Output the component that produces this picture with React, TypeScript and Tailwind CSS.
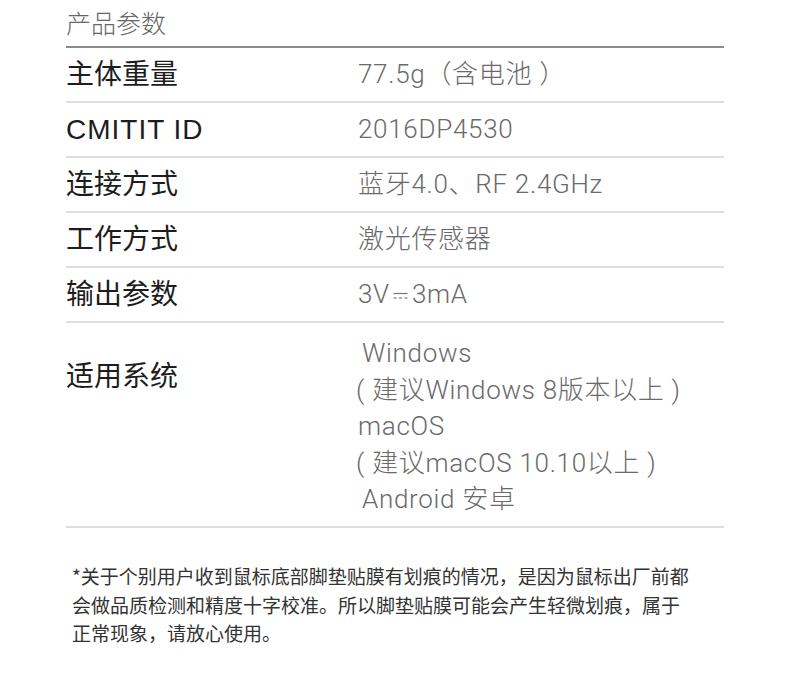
import type { ReactNode } from 'react'

type Row = {
  label: string
  value: ReactNode
  wide?: boolean
}

const labelFont = "font-['Liberation_Sans','Noto_Sans_CJK_SC',sans-serif]"
const valueFont = "font-['Roboto','Noto_Sans_CJK_SC',sans-serif]"

function DcSymbol() {
  return (
    <svg width="15" height="9" viewBox="0 0 15 9" className="ml-[3px] mr-[4px] inline-block align-[2px]">
      <line x1="0.5" y1="1.5" x2="14.5" y2="1.5" stroke="#777" strokeWidth="1.2" />
      <line x1="0.5" y1="6" x2="3.5" y2="6" stroke="#777" strokeWidth="1.2" />
      <line x1="6" y1="6" x2="9" y2="6" stroke="#777" strokeWidth="1.2" />
      <line x1="11.5" y1="6" x2="14.5" y2="6" stroke="#777" strokeWidth="1.2" />
    </svg>
  )
}

const rows: Row[] = [
  { label: '主体重量', value: '77.5g（含电池 ）' },
  { label: 'CMITIT ID', value: '2016DP4530', wide: true },
  { label: '连接方式', value: '蓝牙4.0、RF 2.4GHz' },
  { label: '工作方式', value: '激光传感器' },
  {
    label: '输出参数',
    value: (
      <>
        3V<DcSymbol />3mA
      </>
    ),
  },
]

export default function App() {
  return (
    <div className="min-h-[674px] w-[790px] bg-white">
      <div className="ml-[66px] w-[658px]">
        {/* header */}
        <div className="h-[48px] border-b-2 border-[#8a8a8a] pt-[6px]">
          <h2 className="text-[25px] leading-[32px] text-[#666] font-['Noto_Sans_CJK_SC',sans-serif] font-light">
            产品参数
          </h2>
        </div>

        {/* spec rows */}
        {rows.map(row => (
          <div key={row.label} className="flex h-[55px] items-center border-b-2 border-[#dedede]">
            <div className={`w-[292px] text-[28px] text-[#1d1d1d] ${labelFont} ${row.wide ? 'tracking-[1px]' : ''}`}>
              {row.label}
            </div>
            <div className={`text-[26px] font-light tracking-[0.7px] text-[#6a6a6a] ${valueFont}`}>
              {row.value}
            </div>
          </div>
        ))}

        <div className="flex h-[205px] items-start border-b-2 border-[#dedede]">
          <div className={`w-[292px] pt-[36px] text-[28px] leading-[36px] text-[#1d1d1d] ${labelFont}`}>
            适用系统
          </div>
          <div className={`pt-[12px] text-[26px] font-light leading-[36.5px] tracking-[0.7px] text-[#6a6a6a] ${valueFont}`}>
            <div className="pl-[4px]">Windows</div>
            <div className="-ml-[2px]">( 建议Windows 8版本以上 )</div>
            <div>macOS</div>
            <div className="-ml-[2px]">( 建议macOS 10.10以上 )</div>
            <div className="pl-[4px]">Android 安卓</div>
          </div>
        </div>

        {/* note */}
        <p className="mt-[34px] pl-[6px] text-[19px] leading-[28.5px] text-[#333] font-['Noto_Sans_CJK_SC',sans-serif]">
          *关于个别用户收到鼠标底部脚垫贴膜有划痕的情况，是因为鼠标出厂前都
          <br />
          会做品质检测和精度十字校准。所以脚垫贴膜可能会产生轻微划痕，属于
          <br />
          正常现象，请放心使用。
        </p>
      </div>
    </div>
  )
}
